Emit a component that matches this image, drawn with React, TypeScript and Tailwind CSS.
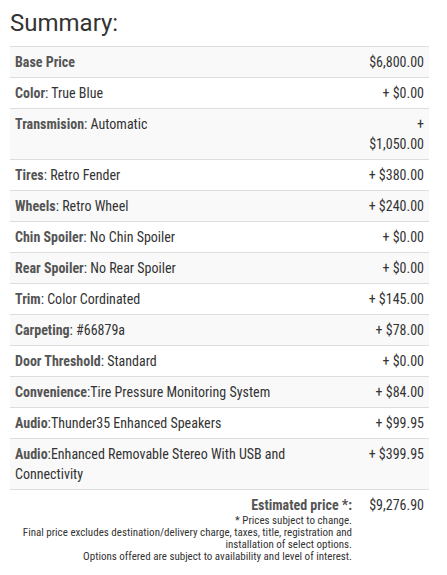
const items = [
  { label: "Base Price", value: "", price: "$6,800.00" },
  { label: "Color", value: ": True Blue", price: "+ $0.00" },
  { label: "Transmision", value: ": Automatic", price: "+ $1,050.00" },
  { label: "Tires", value: ": Retro Fender", price: "+ $380.00" },
  { label: "Wheels", value: ": Retro Wheel", price: "+ $240.00" },
  { label: "Chin Spoiler", value: ": No Chin Spoiler", price: "+ $0.00" },
  { label: "Rear Spoiler", value: ": No Rear Spoiler", price: "+ $0.00" },
  { label: "Trim", value: ": Color Cordinated", price: "+ $145.00" },
  { label: "Carpeting", value: ": #66879a", price: "+ $78.00" },
  { label: "Door Threshold", value: ": Standard", price: "+ $0.00" },
  { label: "Convenience", value: ":Tire Pressure Monitoring System", price: "+ $84.00" },
  { label: "Audio", value: ":Thunder35 Enhanced Speakers", price: "+ $99.95" },
  { label: "Audio", value: ":Enhanced Removable Stereo With USB and Connectivity", price: "+ $399.95" },
];

export default function App() {
  return (
    <div
      className="min-h-screen bg-white px-[10px] pt-[8px] text-[#333] [font-stretch:condensed]"
      style={{ fontFamily: "Roboto, 'Liberation Sans', sans-serif" }}
    >
      <h2 className="mb-[8px] text-[24px] leading-[30px] [font-stretch:normal]">Summary:</h2>

      <table className="w-[419px] table-fixed border-collapse text-[14px] leading-[20px]">
        <colgroup>
          <col className="w-[347px]" />
          <col className="w-[72px]" />
        </colgroup>
        <tbody>
          {items.map((item, i) => (
            <tr key={i} className={i % 2 === 0 ? "bg-[#f9f9f9]" : ""}>
              <td className="border-t border-[#ddd] px-[5px] py-[5px] align-top">
                <span className="font-bold text-[#555]">{item.label}</span>
                {item.value}
              </td>
              <td className="border-t border-[#ddd] px-[5px] py-[5px] text-right align-top">
                {item.price}
              </td>
            </tr>
          ))}
          {/* Totals */}
          <tr>
            <td className="border-t border-[#ddd] pr-[5px] pt-[5px] text-right align-top">
              <div className="text-[14px] font-bold leading-[20px] text-[#555]">Estimated price *:</div>
              <div className="text-[11px] leading-[12px]">
                * Prices subject to change.
                <br />
                Final price excludes destination/delivery charge, taxes, title, registration and installation of
                select options.
                <br />
                Options offered are subject to availability and level of interest.
              </div>
            </td>
            <td className="border-t border-[#ddd] px-[5px] pt-[5px] text-right align-top text-[14px] leading-[20px]">
              $9,276.90
            </td>
          </tr>
        </tbody>
      </table>
    </div>
  );
}
